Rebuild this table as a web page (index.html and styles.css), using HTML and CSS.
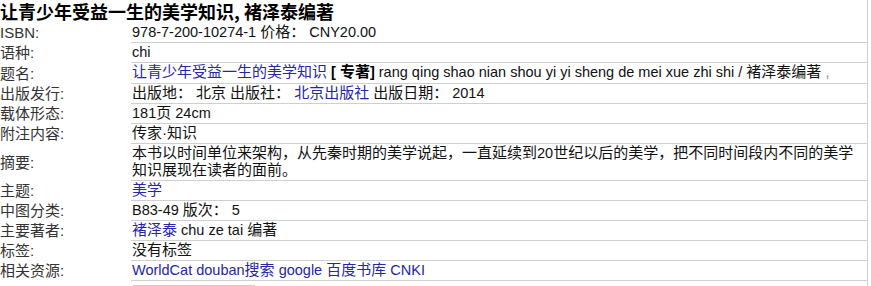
FILE: index.html
```html
<!DOCTYPE html>
<html lang="zh-CN">
<head>
<meta charset="utf-8">
<title>让青少年受益一生的美学知识</title>
<link rel="stylesheet" href="styles.css">
</head>
<body>
<div class="page">
  <h1 class="title">让青少年受益一生的美学知识, 褚泽泰编著</h1>
  <div class="record">
    <div class="label">ISBN:</div>
    <div class="value">978-7-200-10274-1 <span class="zh">价格：</span> CNY20.00</div>

    <div class="label">语种:</div>
    <div class="value">chi</div>

    <div class="label">题名:</div>
    <div class="value value-tall"><a href="#"><span class="zh">让青少年受益一生的美学知识</span></a> <b>[ <span class="zh">专著</span>]</b> rang qing shao nian shou yi yi sheng de mei xue zhi shi / <span class="zh">褚泽泰编著</span> <span class="muted">,</span></div>

    <div class="label">出版发行:</div>
    <div class="value"><span class="zh">出版地：</span> <span class="zh">北京</span> <span class="zh">出版社：</span> <a href="#"><span class="zh">北京出版社</span></a> <span class="zh">出版日期：</span> 2014</div>

    <div class="label">载体形态:</div>
    <div class="value">181<span class="zh">页</span> 24cm</div>

    <div class="label">附注内容:</div>
    <div class="value"><span class="zh">传家·知识</span></div>

    <div class="label">摘要:</div>
    <div class="value"><span class="zh">本书以时间单位来架构，从先秦时期的美学说起，一直延续到</span>20<span class="zh">世纪以后的美学，把不同时间段内不同的美学知识展现在读者的面前。</span></div>

    <div class="label">主题:</div>
    <div class="value"><a href="#"><span class="zh">美学</span></a></div>

    <div class="label">中图分类:</div>
    <div class="value">B83-49 <span class="zh">版次：</span> 5</div>

    <div class="label">主要著者:</div>
    <div class="value"><a href="#"><span class="zh">褚泽泰</span></a> chu ze tai <span class="zh">编著</span></div>

    <div class="label">标签:</div>
    <div class="value"><span class="zh">没有标签</span></div>

    <div class="label">相关资源:</div>
    <div class="value"><a href="#">WorldCat</a> <a href="#">douban<span class="zh">搜索</span></a> <a href="#">google</a> <a href="#"><span class="zh">百度书库</span></a> <a href="#">CNKI</a></div>
  </div>
  <div class="tagbox"></div>
</div>
</body>
</html>
```
FILE: styles.css
```css
html, body {
  margin: 0;
  padding: 0;
  background: #fff;
}
body {
  font-family: "Liberation Sans", Arial, "Noto Sans CJK SC", sans-serif;
  font-size: 14px;
  color: #111;
}
.page {
  width: 867px;
  min-height: 286px;
  border-right: 1px solid #cfcfcf;
}
.title {
  margin: 0;
  height: 23px;
  font-family: "Noto Sans CJK SC", sans-serif;
  font-size: 18px;
  line-height: 23px;
  font-weight: bold;
  color: #000;
}
.record {
  display: grid;
  grid-template-columns: 131px 1fr;
}
.label {
  display: flex;
  align-items: center;
  font-size: 15px;
  color: #333;
  line-height: 13px;
  padding: 1px 0 2px;
}
.value {
  font-size: 14.5px;
  line-height: 17px;
  padding: 1px 3px 1px 1px;
  border-bottom: 1px solid #cfcfcf;
  color: #111;
}
.value-tall {
  padding-bottom: 2px;
}
.zh {
  font-size: 15px;
  line-height: 13px;
}
.value a {
  color: #2626a6;
  text-decoration: none;
}
.value b {
  color: #000;
}
.muted {
  color: #888;
}
.tagbox {
  margin: 4px 0 0 133px;
  width: 122px;
  height: 10px;
  border-top: 1px solid #cfcfcf;
}
```
